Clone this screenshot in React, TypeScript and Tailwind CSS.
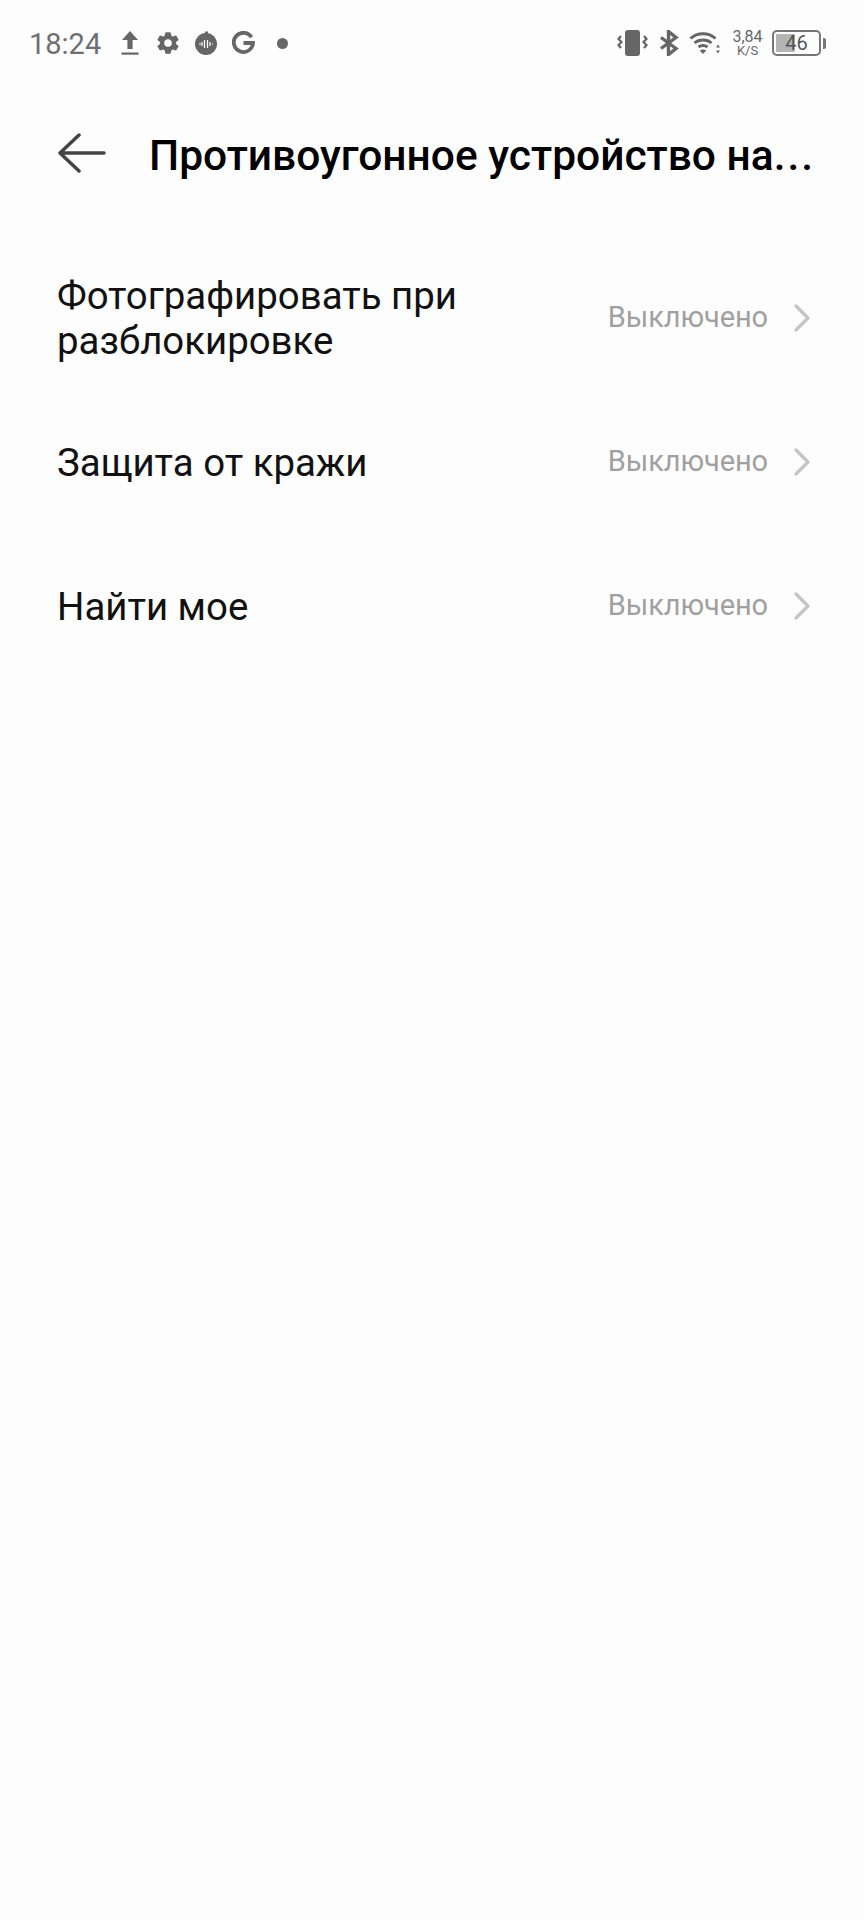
const ROWS = ["Фотографировать при разблокировке", "Защита от кражи", "Найти мое"];

function StatusLeft() {
  return (
    <div className="flex items-center">
      <span className="pt-[2px] text-[29px] leading-none text-[#6f6f6f]">18:24</span>
      <svg className="ml-[19px] h-[26px] w-[20px]" viewBox="0 0 20 26" fill="#666">
        <path d="M10 1 18 10H12.600V19H7.400V10H2Z" />
        <rect x="1.500" y="22.500" width="17" height="2.200" />
      </svg>
      <svg className="ml-[15px] h-[26px] w-[26px]" viewBox="0 0 24 24" fill="#666">
        <path d="M19.430 12.980c.04-.32.07-.64.07-.98s-.03-.66-.07-.98l2.110-1.650a.5.5 0 0 0 .12-.64l-2-3.460a.5.5 0 0 0-.61-.22l-2.490 1a7.300 7.300 0 0 0-1.690-.98l-.38-2.650A.49.49 0 0 0 14 2h-4a.49.49 0 0 0-.49.42l-.38 2.650c-.61.25-1.170.59-1.690.98l-2.490-1a.5.5 0 0 0-.61.22l-2 3.460a.49.49 0 0 0 .12.64l2.110 1.650c-.04.32-.07.65-.07.98s.03.66.07.98l-2.110 1.650a.5.5 0 0 0-.12.64l2 3.460c.12.22.39.3.61.22l2.490-1c.52.4 1.080.73 1.690.98l.38 2.650c.03.24.24.42.49.42h4c.25 0 .46-.18.49-.42l.38-2.650c.61-.25 1.170-.59 1.690-.98l2.490 1c.23.09.49 0 .61-.22l2-3.460a.5.5 0 0 0-.12-.64zM12 15.500a3.500 3.500 0 1 1 0-7 3.500 3.500 0 0 1 0 7z" />
      </svg>
      <svg className="ml-[13px] h-[26px] w-[24px]" viewBox="0 0 24 26" fill="#666">
        <circle cx="12" cy="14" r="11" />
        <path d="M11 1.500h3v3h-3z" />
        <path d="M5 14h2M8 12v4M10.500 10v8M13.500 10v8M16 12v4M18 14h1" stroke="#fff" strokeWidth="1.200" />
      </svg>
      <svg className="ml-[14px] h-[24px] w-[23px]" viewBox="0 0 23 24" fill="none" stroke="#666" strokeWidth="3.800">
        <path d="M19.500 6.200A9.600 9.600 0 1 0 21 12H11.500" />
      </svg>
      <span className="ml-[22px] h-[11px] w-[11px] rounded-full bg-[#666]" />
    </div>
  );
}

function StatusRight() {
  return (
    <div className="flex items-center">
      <svg className="h-[28px] w-[31px]" viewBox="0 0 31 28" fill="none" stroke="#666" strokeWidth="2.200">
        <rect x="8" y="1" width="15" height="26" rx="3" fill="#666" stroke="none" />
        <path d="M4 7 1.500 10 4.500 13 1.500 16 4 19M27 7 29.500 10 26.500 13 29.500 16 27 19" />
      </svg>
      <svg className="ml-[11px] h-[26px] w-[20px]" viewBox="0 0 20 26" fill="none" stroke="#666" strokeWidth="3.400">
        <path d="M2 7.500 17 18.500 9.500 24.500V1.500L17 7.500 2 18.500" />
      </svg>
      <svg className="ml-[10px] h-[24px] w-[32px]" viewBox="0 0 32 24" fill="none" stroke="#666" strokeWidth="3">
        <path d="M1.500 7.500C8.500 1 19.500 1 26.500 7.500M5.500 12C10 8 18 8 22.500 12M9.500 16C12 14 16 14 18.500 16" />
        <path d="M14 23 10.800 19.500C12.800 18 15.200 18 17.200 19.500Z" fill="#666" stroke="none" />
        <path d="M29 13.500 31 16.500H27ZM29 22.500 31 19.500H27Z" fill="#666" stroke="none" />
      </svg>
      <div className="ml-[11px] flex w-[31px] flex-col items-center text-[#666]">
        <span className="text-[16px] leading-[14px]">3,84</span>
        <span className="text-[13px] leading-[13px]">K/S</span>
      </div>
      <div className="ml-[9px] relative flex h-[26px] w-[49px] items-center justify-center rounded-[5px] border-2 border-[#777]">
        <div className="absolute left-[2px] top-[2px] h-[18px] w-[19px] rounded-[1px] bg-[#b4b4b4]" />
        <span className="relative text-[20px] leading-none text-[#555]">46</span>
      </div>
      <div className="ml-[2px] h-[11px] w-[3px] rounded-r-[2px] bg-[#777]" />
    </div>
  );
}

export default function App() {
  return (
    <div className="flex min-h-screen flex-col bg-[#fdfdfd] font-['Roboto',sans-serif]">
      <div className="flex h-[86px] items-center justify-between pl-[29px] pr-[38px]">
        <StatusLeft />
        <StatusRight />
      </div>
      <div className="flex h-[136px] items-center pl-[57px] pr-[48px]">
        <svg className="mb-[2px] h-[40px] w-[49px] shrink-0" viewBox="0 0 49 40" fill="none" stroke="#444" strokeWidth="3.500" strokeLinecap="round" strokeLinejoin="round">
          <path d="M47 20H3M22 2 3 20 22 38" />
        </svg>
        <h1 className="ml-[43px] whitespace-nowrap pt-[4px] text-[42.500px] font-medium leading-none text-black">
          Противоугонное устройство на<span className="tracking-[2px]">...</span>
        </h1>
      </div>
      <div className="mt-[24px] flex flex-col">
        {ROWS.map((row) => (
          <div key={row} className="flex h-[144px] items-center justify-between pl-[57px] pr-[54px]">
            <span className="w-[430px] text-[38.400px] leading-[45px] text-[#111]">{row}</span>
            <div className="flex items-center">
              <span className="text-[29px] tracking-[-0.1px] text-[#a0a0a0]">Выключено</span>
              <svg className="ml-[26px] h-[28px] w-[16px]" viewBox="0 0 16 28" fill="none" stroke="#c4c4c4" strokeWidth="3.200" strokeLinecap="round" strokeLinejoin="round">
                <path d="M2 2 14 14 2 26" />
              </svg>
            </div>
          </div>
        ))}
      </div>
    </div>
  );
}
